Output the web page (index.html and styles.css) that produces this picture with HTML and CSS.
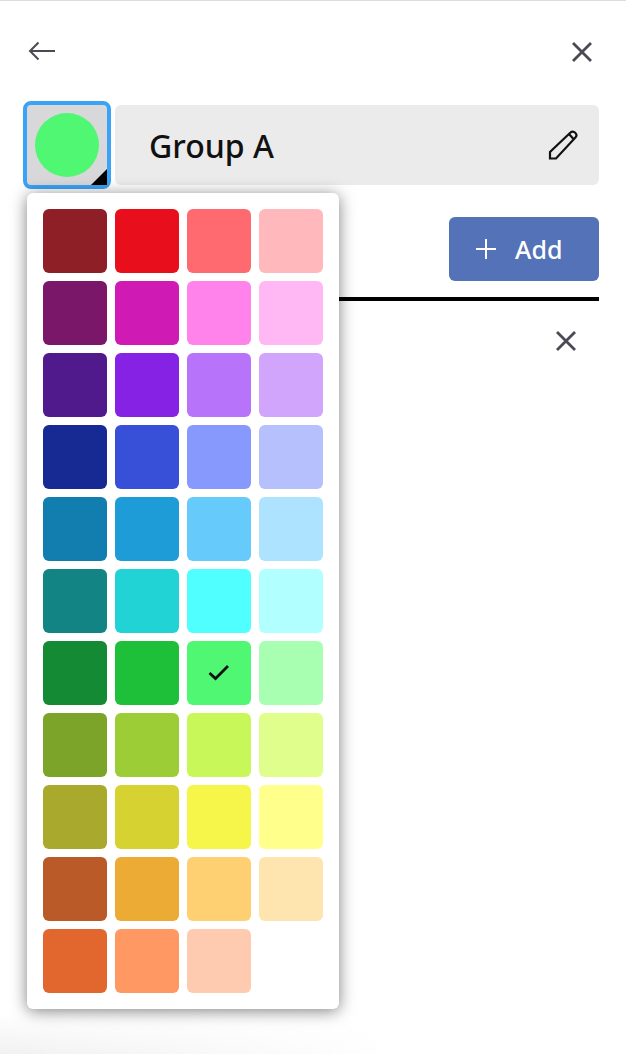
FILE: index.html
```html
<!DOCTYPE html>
<html lang="en">
<head>
<meta charset="utf-8">
<title>Group A</title>
<link rel="stylesheet" href="styles.css">
</head>
<body>
<main class="panel">
  <header class="top">
    <svg class="back" width="28" height="20" viewBox="0 0 28 20"><path d="M27 10H2M10.500 1.500 2 10l8.500 8.500" fill="none" stroke="#4a4a55" stroke-width="2"/></svg>
    <svg class="close" width="22" height="22" viewBox="0 0 22 22"><path d="M2 2l18 18M20 2 2 20" fill="none" stroke="#4a4a55" stroke-width="2.800"/></svg>
  </header>
  <div class="name-row">
    <button class="picker"><span class="dot"></span><span class="corner"></span></button>
    <div class="name">
      <span>Group A</span>
      <svg width="30" height="30" viewBox="0 0 30 30"><path d="M2 28.500v-6.500L22.500 2.500c1.300-1.300 3.200-1.300 4.700.2s1.500 3.400.2 4.700L8 28.500zM21 4 25.500 9" fill="none" stroke="#111" stroke-width="2.200"/></svg>
    </div>
  </div>
  <div class="add-row">
    <button class="add">
      <svg width="22" height="22" viewBox="0 0 22 22"><path d="M11 1v20M1 11h20" stroke="#fff" stroke-width="2" fill="none"/></svg>
      <span>Add</span>
    </button>
  </div>
  <div class="rule"></div>
  <div class="item">
    <svg width="22" height="22" viewBox="0 0 22 22"><path d="M2 2l18 18M20 2 2 20" fill="none" stroke="#4a4a55" stroke-width="2.800"/></svg>
  </div>
</main>
<div class="menu">
  <i class="sw c01"></i><i class="sw c02"></i><i class="sw c03"></i><i class="sw c04"></i>
  <i class="sw c05"></i><i class="sw c06"></i><i class="sw c07"></i><i class="sw c08"></i>
  <i class="sw c09"></i><i class="sw c10"></i><i class="sw c11"></i><i class="sw c12"></i>
  <i class="sw c13"></i><i class="sw c14"></i><i class="sw c15"></i><i class="sw c16"></i>
  <i class="sw c17"></i><i class="sw c18"></i><i class="sw c19"></i><i class="sw c20"></i>
  <i class="sw c21"></i><i class="sw c22"></i><i class="sw c23"></i><i class="sw c24"></i>
  <i class="sw c25"></i><i class="sw c26"></i>
  <i class="sw c27"><svg width="22" height="18" viewBox="0 0 22 18"><path d="M1.500 9l6 5.500L20 2" fill="none" stroke="#111" stroke-width="2.800"/></svg></i>
  <i class="sw c28"></i>
  <i class="sw c29"></i><i class="sw c30"></i><i class="sw c31"></i><i class="sw c32"></i>
  <i class="sw c33"></i><i class="sw c34"></i><i class="sw c35"></i><i class="sw c36"></i>
  <i class="sw c37"></i><i class="sw c38"></i><i class="sw c39"></i><i class="sw c40"></i>
  <i class="sw c41"></i><i class="sw c42"></i><i class="sw c43"></i>
</div>
<div class="fade"></div>
</body>
</html>
```
FILE: styles.css
```css
* { box-sizing: border-box; }
html, body { margin: 0; height: 100%; }
body {
  position: relative;
  width: 626px;
  height: 1054px;
  overflow: hidden;
  background: #fff;
  font-family: "Noto Sans", "Open Sans", sans-serif;
}
.panel {
  border-top: 1px solid #dcdcdc;
  padding: 0 27px;
  display: flex;
  flex-direction: column;
}
.top {
  height: 100px;
  padding: 40px 6px 0 1px;
  display: flex;
  justify-content: space-between;
  align-items: flex-start;
}
.name-row {
  margin-left: -4px;
  display: flex;
  align-items: center;
  gap: 4px;
}
.picker {
  position: relative;
  width: 88px;
  height: 88px;
  padding: 0;
  border: 4px solid #3aa3f5;
  border-radius: 8px;
  background: #d8d8da;
  display: flex;
  align-items: center;
  justify-content: center;
}
.dot {
  width: 64px;
  height: 64px;
  border-radius: 50%;
  background: #50f773;
}
.corner {
  position: absolute;
  right: 0;
  bottom: 0;
  width: 16px;
  height: 16px;
  background: #000;
  clip-path: polygon(100% 0, 100% 100%, 0 100%);
}
.name {
  width: 484px;
  height: 80px;
  border-radius: 6px;
  background: #ebebeb;
  padding: 0 21px 0 34px;
  display: flex;
  align-items: center;
  justify-content: space-between;
  color: #111;
  font-size: 32px;
  font-weight: 500;
}
.add-row {
  margin-top: 28px;
  display: flex;
  justify-content: flex-end;
}
.add {
  width: 150px;
  height: 64px;
  border: 0;
  border-radius: 6px;
  background: #5472b8;
  color: #fff;
  font: 500 25px "Noto Sans", "Open Sans", sans-serif;
  display: flex;
  align-items: center;
  gap: 18px;
  padding: 0 0 0 26px;
}
.rule {
  margin-top: 16px;
  height: 4px;
  background: #000;
}
.item {
  display: flex;
  justify-content: flex-end;
  padding: 29px 22px 0 0;
}
.menu {
  position: absolute;
  left: 27px;
  top: 193px;
  width: 312px;
  height: 816px;
  padding: 16px;
  background: #fff;
  border-radius: 6px;
  box-shadow: 0 2px 16px rgba(0, 0, 0, .5);
  display: grid;
  grid-template-columns: repeat(4, 64px);
  grid-auto-rows: 64px;
  gap: 8px;
  z-index: 2;
}
.sw {
  border-radius: 6px;
  display: flex;
  align-items: center;
  justify-content: center;
}
.c01 { background: #8f1f26; } .c02 { background: #e90e1b; } .c03 { background: #ff6a70; } .c04 { background: #ffb9bc; }
.c05 { background: #7a1768; } .c06 { background: #cf1ab4; } .c07 { background: #ff83ea; } .c08 { background: #ffb8f3; }
.c09 { background: #501a8c; } .c10 { background: #8622e4; } .c11 { background: #b873fb; } .c12 { background: #d0a5fb; }
.c13 { background: #172a94; } .c14 { background: #3850d8; } .c15 { background: #8899fd; } .c16 { background: #b6c0fd; }
.c17 { background: #127eb0; } .c18 { background: #1e9cd7; } .c19 { background: #66cbfb; } .c20 { background: #ade3fe; }
.c21 { background: #128484; } .c22 { background: #21d3d5; } .c23 { background: #50ffff; } .c24 { background: #b1ffff; }
.c25 { background: #138a33; } .c26 { background: #1ec03a; } .c27 { background: #50f773; } .c28 { background: #a9ffb1; }
.c29 { background: #7ba428; } .c30 { background: #9dcd36; } .c31 { background: #c7f758; } .c32 { background: #e0fe8b; }
.c33 { background: #a9aa2d; } .c34 { background: #d5d232; } .c35 { background: #f5f54a; } .c36 { background: #ffff8c; }
.c37 { background: #ba5a28; } .c38 { background: #ebab35; } .c39 { background: #fed072; } .c40 { background: #fee5b0; }
.c41 { background: #e2672e; } .c42 { background: #ff9863; } .c43 { background: #fecab0; }
.fade {
  position: absolute;
  left: 0;
  bottom: 0;
  width: 400px;
  height: 40px;
  background: linear-gradient(to right, #f1f1f1, rgba(255, 255, 255, 0));
  -webkit-mask-image: linear-gradient(to bottom, transparent, #000);
  mask-image: linear-gradient(to bottom, transparent, #000);
}
```
